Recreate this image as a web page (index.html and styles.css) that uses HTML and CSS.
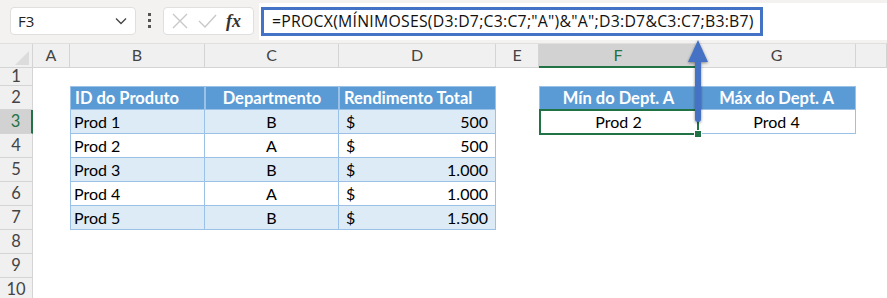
FILE: index.html
```html
<!DOCTYPE html>
<html lang="pt">
<head>
    <meta charset="UTF-8">
    <title>PROCX - Mínimo do Dept. A</title>
    <link rel="stylesheet" href="styles.css">
</head>
<body>
    <div class="toolbar">
        <div class="namebox">
            <span>F3</span>
            <svg class="chev" width="12" height="8" viewBox="0 0 12 8"><path d="M1 1.5 L6 6.5 L11 1.5" fill="none" stroke="#444" stroke-width="1.3"/></svg>
        </div>
        <div class="dots"><i></i><i></i><i></i></div>
        <div class="fxbox">
            <svg width="18" height="18" viewBox="0 0 18 18"><path d="M2 2 L16 16 M16 2 L2 16" stroke="#c8c8c8" stroke-width="1.4"/></svg>
            <svg width="20" height="18" viewBox="0 0 20 18"><path d="M2 9 L8 15 L19 3" fill="none" stroke="#c8c8c8" stroke-width="1.4"/></svg>
            <span class="fx">fx</span>
        </div>
        <div class="formula-bar">
            <div class="formula">=PROCX(MÍNIMOSES(D3:D7;C3:C7;"A")&amp;"A";D3:D7&amp;C3:C7;B3:B7)</div>
        </div>
    </div>

    <div class="sheet">
        <div class="row colhead">
            <div class="corner"></div>
            <div>A</div><div>B</div><div>C</div><div>D</div><div>E</div>
            <div class="active-col">F</div><div>G</div><div></div>
        </div>
        <div class="row short">
            <div class="rh">1</div><div></div><div></div><div></div><div></div><div></div><div></div><div></div><div></div>
        </div>
        <div class="row">
            <div class="rh">2</div><div></div>
            <div class="th first left">ID do Produto</div>
            <div class="th first center">Departmento</div>
            <div class="th first left">Rendimento Total</div>
            <div></div>
            <div class="th first center">Mín do Dept. A</div>
            <div class="th center">Máx do Dept. A</div>
            <div></div>
        </div>
        <div class="row">
            <div class="rh active-row">3</div><div></div>
            <div class="td band first">Prod 1</div>
            <div class="td band center">B</div>
            <div class="td band money"><span>$</span><span>500</span></div>
            <div></div>
            <div class="td first center selected">Prod 2</div>
            <div class="td center">Prod 4</div>
            <div></div>
        </div>
        <div class="row">
            <div class="rh">4</div><div></div>
            <div class="td first">Prod 2</div>
            <div class="td center">A</div>
            <div class="td money"><span>$</span><span>500</span></div>
            <div></div><div></div><div></div><div></div>
        </div>
        <div class="row">
            <div class="rh">5</div><div></div>
            <div class="td band first">Prod 3</div>
            <div class="td band center">B</div>
            <div class="td band money"><span>$</span><span>1.000</span></div>
            <div></div><div></div><div></div><div></div>
        </div>
        <div class="row">
            <div class="rh">6</div><div></div>
            <div class="td first">Prod 4</div>
            <div class="td center">A</div>
            <div class="td money"><span>$</span><span>1.000</span></div>
            <div></div><div></div><div></div><div></div>
        </div>
        <div class="row">
            <div class="rh">7</div><div></div>
            <div class="td band first">Prod 5</div>
            <div class="td band center">B</div>
            <div class="td band money"><span>$</span><span>1.500</span></div>
            <div></div><div></div><div></div><div></div>
        </div>
        <div class="row">
            <div class="rh">8</div><div></div><div></div><div></div><div></div><div></div><div></div><div></div><div></div>
        </div>
        <div class="row">
            <div class="rh">9</div><div></div><div></div><div></div><div></div><div></div><div></div><div></div><div></div>
        </div>
        <div class="row">
            <div class="rh">10</div><div></div><div></div><div></div><div></div><div></div><div></div><div></div><div></div>
        </div>
    </div>

    <!-- callout arrow pointing at the formula -->
    <svg class="arrow" width="30" height="96" viewBox="0 0 30 96">
        <defs>
            <filter id="sh" x="-50%" y="-20%" width="200%" height="140%">
                <feGaussianBlur in="SourceAlpha" stdDeviation="1.6"/>
                <feOffset dx="0" dy="1"/>
                <feComponentTransfer><feFuncA type="linear" slope="0.45"/></feComponentTransfer>
                <feMerge><feMergeNode/><feMergeNode in="SourceGraphic"/></feMerge>
            </filter>
        </defs>
        <g filter="url(#sh)">
            <path d="M15 3 L25 25 L18 25 L18 82 Q18 85 15 85 Q12 85 12 82 L12 25 L5 25 Z" fill="#4472c4"/>
        </g>
    </svg>
</body>
</html>
```

FILE: styles.css
```css
body {
    margin: 0;
    padding: 0;
    background-color: #ffffff;
    font-family: Lato, "Liberation Sans", sans-serif;
    overflow: hidden;
}

.toolbar {
    height: 44px;
    box-sizing: border-box;
    background-color: #f3f2f1;
    border-bottom: 1px solid #e1dfdd;
    display: flex;
    align-items: flex-start;
    position: relative;
}

.namebox {
    margin: 7px 0 0 10px;
    width: 126px;
    height: 28px;
    box-sizing: border-box;
    background: white;
    border: 1px solid #e1dfdd;
    border-radius: 4px;
    display: flex;
    align-items: center;
    justify-content: space-between;
    padding: 0 8px 0 7px;
    font-family: "Open Sans", sans-serif;
    font-size: 15px;
    color: #222;
}

.dots {
    margin: 13px 0 0 12px;
    width: 4px;
    display: flex;
    flex-direction: column;
    gap: 3px;
}

.dots i {
    display: block;
    width: 3px;
    height: 3px;
    background: #555;
}

.fxbox {
    margin: 7px 0 0 11px;
    width: 91px;
    height: 28px;
    box-sizing: border-box;
    background: white;
    border: 1px solid #e1dfdd;
    border-radius: 4px;
    display: flex;
    align-items: center;
    gap: 8px;
    padding: 0 0 0 7px;
}

.fx {
    font-family: "Liberation Serif", serif;
    font-style: italic;
    font-weight: bold;
    font-size: 18px;
    color: #333;
    margin-left: 1px;
}

.formula-bar {
    flex: 1;
    margin: 3px 0 0 5px;
    height: 37px;
    background: white;
}

.formula {
    margin: 4px 0 0 2px;
    width: 502px;
    height: 29px;
    box-sizing: border-box;
    border: 3px solid #4472c4;
    font-family: "Open Sans", sans-serif;
    font-size: 15.8px;
    letter-spacing: 0.25px;
    line-height: 23px;
    padding-left: 8px;
    color: #111;
    white-space: nowrap;
}

.sheet {
    font-size: 16px;
    color: #000;
}

.row {
    display: grid;
    grid-template-columns: 33px 37px 135px 134px 157px 43px 159px 158px 1fr;
    height: 24px;
}

.row.short {
    height: 18px;
}

.row > div {
    box-sizing: border-box;
}

.colhead {
    height: 23px;
    background: #f0f0f0;
    border-bottom: 1px solid #d4d4d4;
    color: #444;
    font-size: 16px;
}

.colhead > div {
    border-right: 1px solid #d4d4d4;
    text-align: center;
    line-height: 22px;
}

.colhead .corner {
    position: relative;
}

.colhead .corner::after {
    content: "";
    position: absolute;
    right: 3px;
    bottom: 3px;
    border-left: 14px solid transparent;
    border-bottom: 14px solid #dcdcdc;
}

.colhead .active-col {
    background: #d2d2d2;
    color: #217346;
    border-bottom: 2px solid #217346;
}

.rh {
    background: #f0f0f0;
    border-right: 1px solid #d4d4d4;
    border-bottom: 1px solid #d4d4d4;
    color: #444;
    text-align: center;
    font-size: 16.5px;
    line-height: 23px;
}

.short .rh {
    line-height: 17px;
}

.rh.active-row {
    background: #d2d2d2;
    color: #217346;
    border-right: 2px solid #217346;
}

.th {
    background: #5b9bd5;
    color: white;
    font-weight: bold;
    font-size: 16.5px;
    border-right: 1px solid #9bc2e6;
    border-bottom: 1px solid #9bc2e6;
    border-top: 1px solid #9bc2e6;
    line-height: 22px;
    padding: 0 4px;
    white-space: nowrap;
}

.th.first {
    border-left: 1px solid #9bc2e6;
}

.td {
    border-right: 1px solid #9bc2e6;
    border-bottom: 1px solid #9bc2e6;
    line-height: 23px;
    padding: 0 3px;
    white-space: nowrap;
}

.td.first {
    border-left: 1px solid #9bc2e6;
}

.td.band {
    background: #ddebf7;
}

.center {
    text-align: center;
}

.left {
    text-align: left;
}

.money {
    display: flex;
    justify-content: space-between;
    padding: 0 7px 0 7px;
}

.selected {
    position: relative;
}

.selected::after {
    content: "";
    position: absolute;
    left: -1px;
    top: -1px;
    right: -2px;
    bottom: -2px;
    border: 2px solid #217346;
}

.selected::before {
    content: "";
    position: absolute;
    right: -5px;
    bottom: -5px;
    width: 6px;
    height: 6px;
    background: #217346;
    border: 1px solid white;
    z-index: 2;
}

.arrow {
    position: absolute;
    left: 683px;
    top: 37px;
}
```
